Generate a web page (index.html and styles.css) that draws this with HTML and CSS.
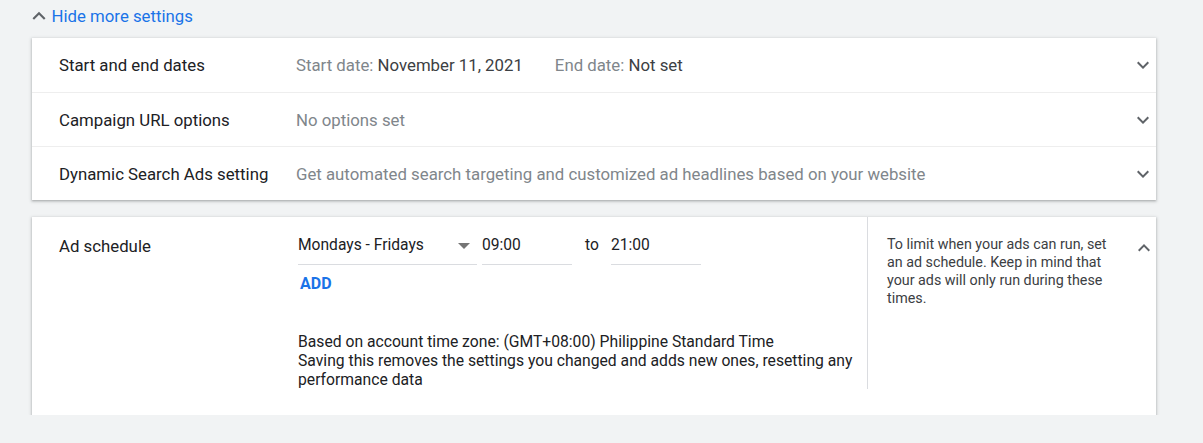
FILE: index.html
```html
<!DOCTYPE html>
<html>
<head>
<meta charset="utf-8">
<link rel="stylesheet" href="styles.css">
</head>
<body>
<div class="page">
  <div class="toggle">
    <svg class="chev-sm" width="26" height="26" viewBox="0 0 24 24"><path d="M7.41 15.41L12 10.83l4.59 4.58L18 14l-6-6-6 6z" fill="#5f6368"/></svg>
    <span>Hide more settings</span>
  </div>

  <div class="card">
    <div class="row">
      <div class="label">Start and end dates</div>
      <div class="value"><span class="muted">Start date:</span> <span class="strong">November 11, 2021</span><span class="sp"></span><span class="muted">End date:</span> <span class="strong">Not set</span></div>
      <svg class="chev" width="24" height="24" viewBox="0 0 24 24"><path d="M7.41 8.59L12 13.17l4.59-4.58L18 10l-6 6-6-6 1.41-1.41z"/></svg>
    </div>
    <div class="row">
      <div class="label">Campaign URL options</div>
      <div class="value muted">No options set</div>
      <svg class="chev" width="24" height="24" viewBox="0 0 24 24"><path d="M7.41 8.59L12 13.17l4.59-4.58L18 10l-6 6-6-6 1.41-1.41z"/></svg>
    </div>
    <div class="row">
      <div class="label">Dynamic Search Ads setting</div>
      <div class="value muted">Get automated search targeting and customized ad headlines based on your website</div>
      <svg class="chev" width="24" height="24" viewBox="0 0 24 24"><path d="M7.41 8.59L12 13.17l4.59-4.58L18 10l-6 6-6-6 1.41-1.41z"/></svg>
    </div>
  </div>

  <div class="card schedule">
    <div class="label slabel">Ad schedule</div>
    <div class="main">
      <div class="fields">
        <div class="field select"><span>Mondays - Fridays</span><span class="caret"></span></div>
        <div class="field time">09:00</div>
        <div class="to">to</div>
        <div class="field time2">21:00</div>
      </div>
      <div class="add">ADD</div>
      <div class="note">Based on account time zone: (GMT+08:00) Philippine Standard Time<br>Saving this removes the settings you changed and adds new ones, resetting any performance data</div>
    </div>
    <div class="help">To limit when your ads can run, set an ad schedule. Keep in mind that your ads will only run during these times.</div>
    <svg class="chev up" width="24" height="24" viewBox="0 0 24 24"><path d="M7.41 15.41L12 10.83l4.59 4.58L18 14l-6-6-6 6z"/></svg>
  </div>
</div>
</body>
</html>
```

FILE: styles.css
```css
html, body {
  margin: 0;
  padding: 0;
  background: #f1f3f4;
  font-family: Roboto, "Liberation Sans", Arial, sans-serif;
  color: #202124;
}
.page {
  padding-left: 32px;
  width: 1124px;
}
.toggle {
  height: 32px;
  display: flex;
  align-items: center;
  color: #1a73e8;
  font-size: 16.8px;
  margin-bottom: 6px;
}
.chev-sm {
  flex: none;
  margin-left: -6.5px;
  margin-top: -1px;
}
.card {
  background: #fff;
  box-shadow: 0 1px 2px 0 rgba(60,64,67,.3), 0 1px 3px 1px rgba(60,64,67,.15);
}
.row {
  height: 54px;
  display: flex;
  align-items: center;
  padding-left: 27px;
  border-top: 1px solid #eeeeee;
  box-sizing: border-box;
}
.row:first-child {
  border-top: none;
}
.label {
  width: 237px;
  flex: none;
  font-size: 16.8px;
  color: #202124;
}
.value {
  flex: 1;
  font-size: 16.8px;
  color: #3c4043;
}
.muted {
  color: #80868b;
}
.strong {
  color: #3c4043;
}
.sp {
  display: inline-block;
  width: 32px;
}
.chev {
  flex: none;
  fill: #5f6368;
  margin-right: 1px;
}
.schedule {
  margin-top: 17px;
  display: flex;
  align-items: flex-start;
  padding: 0 0 26px 27px;
}
.slabel {
  padding-top: 19px;
  line-height: 20px;
}
.main {
  width: 557px;
  flex: none;
  padding: 18px 12px 0 2px;
  border-right: 1px solid #dadce0;
}
.fields {
  display: flex;
  align-items: flex-end;
}
.field {
  line-height: 20px;
  padding-bottom: 9px;
  border-bottom: 1px solid #dadce0;
  font-size: 15.6px;
  color: #202124;
}
.select {
  width: 179px;
  display: flex;
  justify-content: space-between;
  align-items: center;
}
.caret {
  width: 0;
  height: 0;
  border-left: 6px solid transparent;
  border-right: 6px solid transparent;
  border-top: 6px solid #757575;
  margin-right: 7px;
  margin-top: 2px;
}
.time {
  width: 90px;
  margin-left: 5px;
}
.time2 {
  width: 90px;
}
.to {
  width: 39px;
  padding-left: 13px;
  box-sizing: border-box;
  line-height: 20px;
  padding-bottom: 10px;
  font-size: 15.6px;
}
.add {
  margin-top: 10px;
  padding-left: 2px;
  color: #1a73e8;
  font-weight: 700;
  font-size: 16px;
  line-height: 18px;
}
.note {
  margin-top: 39px;
  font-size: 15.7px;
  line-height: 19px;
  color: #202124;
}
.help {
  width: 225px;
  flex: none;
  padding: 18px 0 0 19px;
  font-size: 14.3px;
  line-height: 18px;
  color: #3c4043;
}
.up {
  flex: none;
  margin-left: 20px;
  margin-top: 19px;
}
```
